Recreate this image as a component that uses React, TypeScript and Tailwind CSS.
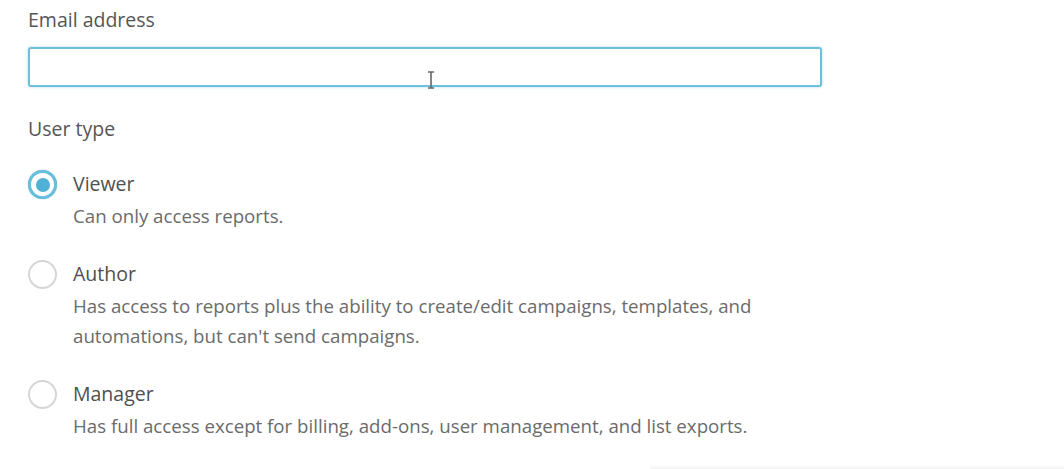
import { useState } from 'react';

const options = [
  { id: 'viewer', label: 'Viewer', desc: ['Can only access reports.'] },
  {
    id: 'author',
    label: 'Author',
    desc: [
      'Has access to reports plus the ability to create/edit campaigns, templates, and',
      "automations, but can't send campaigns.",
    ],
  },
  {
    id: 'manager',
    label: 'Manager',
    desc: ['Has full access except for billing, add-ons, user management, and list exports.'],
  },
];

function Radio({ checked }: { checked: boolean }) {
  return (
    <span
      className={
        checked
          ? 'mt-[1px] flex h-[29px] w-[29px] shrink-0 items-center justify-center rounded-full border-[3.5px] border-[#66bfdc] bg-white shadow-[0_0_1px_#4aa8c8]'
          : 'mt-[1px] flex h-[29px] w-[29px] shrink-0 items-center justify-center rounded-full border-2 border-[#d6d6d6] bg-white'
      }
    >
      {checked && <span className="h-[14px] w-[14px] rounded-full bg-[#4fb1d5]" />}
    </span>
  );
}

export default function App() {
  const [userType, setUserType] = useState('viewer');

  return (
    <div
      className="relative h-[469px] w-[1064px] overflow-hidden bg-white pl-[28px] pt-[8px] text-[#555]"
      style={{ fontFamily: '"Open Sans", "Noto Sans", sans-serif' }}
    >
      <label className="block text-[19.5px] font-medium leading-[24px]">Email address</label>
      <input
        type="text"
        className="mt-[15px] block h-[40px] w-[794px] rounded-[3px] border-2 border-[#6cc0da] bg-white px-3 shadow-[0_0_3px_rgba(90,185,216,0.5)] outline-none"
      />

      <div className="mt-[30px] text-[19.5px] font-medium leading-[24px]">User type</div>

      <div className="mt-[28px] flex flex-col gap-[28px]">
        {options.map((o) => (
          <div
            key={o.id}
            className="flex cursor-pointer items-start gap-[16px]"
            onClick={() => setUserType(o.id)}
          >
            <Radio checked={userType === o.id} />
            <div>
              <div className="text-[19.5px] font-medium leading-[30px] text-[#4f4f4f]">{o.label}</div>
              <div className="mt-[2px] text-[18.7px] leading-[30px] text-[#6b6b6b]">
                {o.desc.map((line) => (
                  <div key={line}>{line}</div>
                ))}
              </div>
            </div>
          </div>
        ))}
      </div>

      {/* text cursor over the input */}
      <svg className="absolute left-[426px] top-[71px]" width="10" height="18" viewBox="0 0 10 18">
        <path d="M2 1h6M5 1v16M2 17h6" stroke="#666" strokeWidth="1.6" fill="none" />
      </svg>

      <div className="absolute bottom-0 left-[650px] h-[4px] w-[414px] bg-gradient-to-b from-transparent to-[#f2f2f2]" />
    </div>
  );
}
